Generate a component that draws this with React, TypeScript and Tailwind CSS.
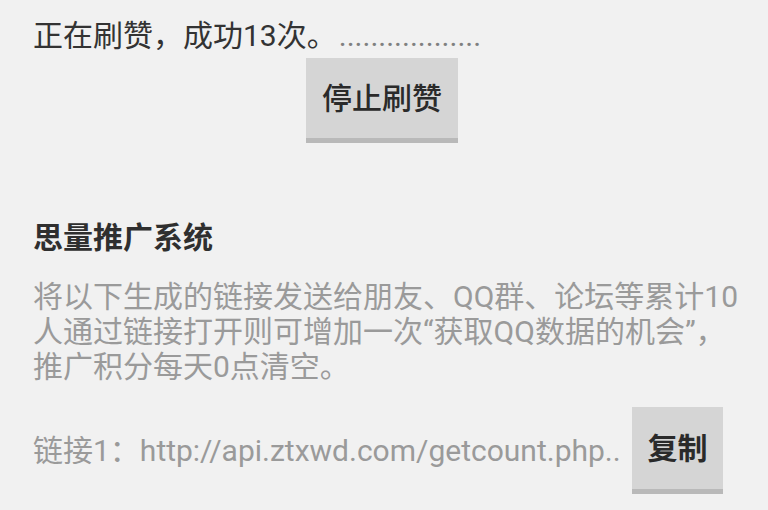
export default function App() {
  return (
    <div
      className="w-[768px] h-[510px] overflow-hidden bg-[#f1f1f1] pl-[33px] pr-[45px] flex flex-col text-[30px] text-[#333333]"
      style={{ fontFamily: 'Roboto, "Noto Sans CJK SC", sans-serif' }}
    >
      {/* status line */}
      <div className="mt-[18px] h-[35px] leading-[35px] whitespace-nowrap flex items-center">
        <span>正在刷赞，成功13次。</span>
        <span className="ml-[2px] text-[#808080]">..................</span>
      </div>

      <div className="mt-[5px] flex">
        <button className="ml-[273px] w-[152px] h-[85px] bg-[#d5d5d5] border-b-[5px] border-[#b9b9b9] text-[30px] font-medium text-[#2a2a2a]">
          停止刷赞
        </button>
      </div>

      {/* promo section */}
      <h2 className="mt-[77px] h-[35px] leading-[35px] font-bold text-[30px] text-[#2f2f2f] whitespace-nowrap">
        思量推广系统
      </h2>

      <div className="mt-[24px] text-[#9a9a9a] leading-[35px] whitespace-nowrap">
        <div>将以下生成的链接发送给朋友、QQ群、论坛等累计10</div>
        <div>人通过链接打开则可增加一次“获取QQ数据的机会”，</div>
        <div>推广积分每天0点清空。</div>
      </div>

      <div className="mt-[23px] flex items-center justify-between">
        <span className="text-[#9a9a9a] whitespace-nowrap leading-[35px]">
          链接1：http://api.ztxwd.com/getcount.php..
        </span>
        <button className="w-[91px] h-[87px] bg-[#d5d5d5] border-b-[5px] border-[#b9b9b9] text-[30px] font-bold text-[#2a2a2a]">
          复制
        </button>
      </div>
    </div>
  )
}
